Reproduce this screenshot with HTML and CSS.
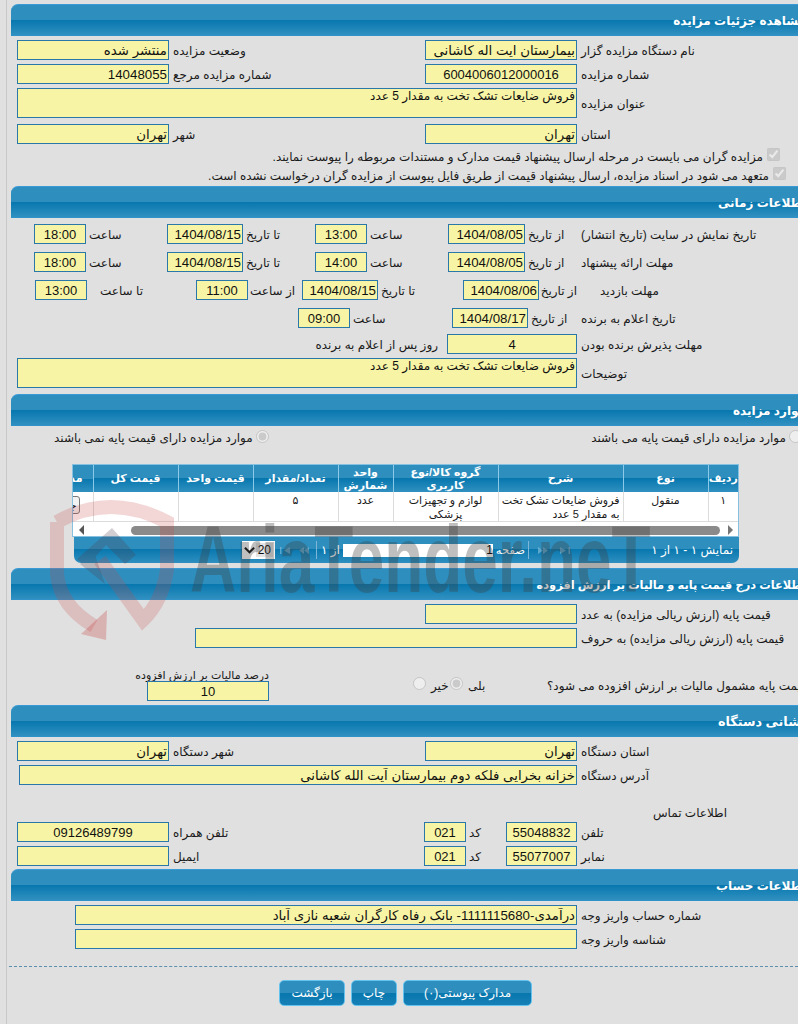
FILE: index.html
```html
<!DOCTYPE html>
<html lang="fa" dir="rtl">
<head>
<meta charset="utf-8">
<title>مشاهده جزئیات مزایده</title>
<link rel="stylesheet" href="styles.css">
</head>
<body>
<div class="page">

<h2 class="bar first">مشاهده جزئیات مزایده</h2>
<div class="row mt4"><label class="lbl">نام دستگاه مزایده گزار</label><input class="fld w152" readonly value="بیمارستان ایت اله کاشانی"><label class="lbl2">وضعیت مزایده</label><input class="fld w152" readonly value="منتشر شده"></div>
<div class="row mt4"><label class="lbl">شماره مزایده</label><input class="fld w152 ctr" readonly value="6004006012000016"><label class="lbl2">شماره مزایده مرجع</label><input class="fld w152" readonly value="14048055"></div>
<div class="row tall mt4"><label class="lbl">عنوان مزایده</label><div class="fld area wide">فروش ضایعات تشک تخت به مقدار 5 عدد</div></div>
<div class="row mt6"><label class="lbl">استان</label><input class="fld w152" readonly value="تهران"><label class="lbl2">شهر</label><input class="fld w152" readonly value="تهران"></div>
<div class="check c1"><input type="checkbox" checked disabled><span>مزایده گران می بایست در مرحله ارسال پیشنهاد قیمت مدارک و مستندات مربوطه را پیوست نمایند.</span></div>
<div class="check c2"><input type="checkbox" checked disabled><span>متعهد می شود در اسناد مزایده، ارسال پیشنهاد قیمت از طریق فایل پیوست از مزایده گران درخواست نشده است.</span></div>

<h2 class="bar s2">اطلاعات زمانی</h2>
<div class="row mt6"><label class="lbl">تاریخ نمایش در سایت (تاریخ انتشار)</label><span class="k k52">از تاریخ</span><input class="fld w77" readonly value="1404/08/05"><span class="k k81">ساعت</span><input class="fld w52 ctr" readonly value="13:00"><span class="k k72">تا تاریخ</span><input class="fld w76" readonly value="1404/08/15"><span class="k k81">ساعت</span><input class="fld w52 ctr" readonly value="18:00"></div>
<div class="row mt8"><label class="lbl">مهلت ارائه پیشنهاد</label><span class="k k52">از تاریخ</span><input class="fld w77" readonly value="1404/08/05"><span class="k k81">ساعت</span><input class="fld w52 ctr" readonly value="14:00"><span class="k k72">تا تاریخ</span><input class="fld w76" readonly value="1404/08/15"><span class="k k81">ساعت</span><input class="fld w52 ctr" readonly value="18:00"></div>
<div class="row mt8"><label class="lbl ind19">مهلت بازدید</label><span class="k k38">از تاریخ</span><input class="fld w76" readonly value="1404/08/06"><span class="k k85">تا تاریخ</span><input class="fld w76" readonly value="1404/08/15"><span class="k k54">از ساعت</span><input class="fld w52 ctr" readonly value="11:00"><span class="k k109">تا ساعت</span><input class="fld w52 ctr" readonly value="13:00"></div>
<div class="row mt8"><label class="lbl">تاریخ اعلام به برنده</label><span class="k k49">از تاریخ</span><input class="fld w76" readonly value="1404/08/17"><span class="k k102">ساعت</span><input class="fld w52 ctr" readonly value="09:00"></div>
<div class="row mt6"><label class="lbl">مهلت پذیرش برنده بودن</label><input class="fld w130 ctr" readonly value="4"><span class="after">روز پس از اعلام به برنده</span></div>
<div class="row tall mt4"><label class="lbl">توضیحات</label><div class="fld area wide">فروش ضایعات تشک تخت به مقدار 5 عدد</div></div>

<h2 class="bar s3">موارد مزایده</h2>
<div class="radios">
  <div class="radio-a"><input type="radio" name="base" disabled><span>موارد مزایده دارای قیمت پایه می باشند</span></div>
  <div class="radio-b"><input type="radio" name="base" checked disabled><span>موارد مزایده دارای قیمت پایه نمی باشند</span></div>
</div>

<div class="grid-wrap">
  <table class="grid">
    <thead><tr><th class="c30">ردیف</th><th class="c85">نوع</th><th class="c125">شرح</th><th class="c105">گروه کالا/نوع کاربری</th><th class="c55">واحد شمارش</th><th class="c85">تعداد/مقدار</th><th class="c75">قیمت واحد</th><th class="c85">قیمت کل</th><th class="c21">مدارک</th></tr></thead>
    <tbody><tr><td>۱</td><td>منقول</td><td class="start">فروش ضایعات تشک تخت<br>به مقدار 5 عدد</td><td>لوازم و تجهیزات پزشکی</td><td>عدد</td><td>۵</td><td></td><td></td><td class="clip"><button class="mini" type="button">جزئیات</button></td></tr></tbody>
  </table>
  <div class="hscroll"><span class="arr right"></span><span class="thumb"></span><span class="arr left"></span></div>
</div>
<div class="pager">
  <span class="pg-info">نمایش ۱ - ۱ از ۱</span>
  <span class="pg-icons">
    <svg class="pg-ic" viewBox="0 0 10 7"><path d="M0 0v7l6-3.500zM8.500 0h1.500v7h-1.500z"/></svg>
    <svg class="pg-ic" viewBox="0 0 10 7"><path d="M0 0v7l5-3.500zM5 0v7l5-3.500z"/></svg>
  </span>
  <span class="pg-sep"></span>
  <span class="pg-word">صفحه</span><input class="pg-num" readonly value="1"><span class="pg-of">از ۱</span>
  <span class="pg-sep sep2"></span>
  <span class="pg-icons second">
    <svg class="pg-ic" viewBox="0 0 10 7"><path d="M5 0v7l-5-3.500zM10 0v7l-5-3.500z"/></svg>
    <svg class="pg-ic" viewBox="0 0 10 7"><path d="M0 0h1.500v7h-1.500zM10 0v7l-6-3.500z"/></svg>
  </span>
  <span class="pg-size"><b>20</b><svg viewBox="0 0 12 8"><path d="M1 1.500l5 5 5-5" fill="none" stroke="#111" stroke-width="2.200"/></svg></span>
</div>

<h2 class="bar s4">اطلاعات درج قیمت پایه و مالیات بر ارزش افزوده</h2>
<div class="row mt4"><label class="lbl">قیمت پایه (ارزش ریالی مزایده) به عدد</label><input class="fld w152" readonly></div>
<div class="row mt4"><label class="lbl">قیمت پایه (ارزش ریالی مزایده) به حروف</label><input class="fld w382" readonly></div>
<div class="vat">
  <label class="vat-q">قیمت پایه مشمول مالیات بر ارزش افزوده می شود؟</label>
  <span class="yes">بلی</span><input class="r-yes" type="radio" name="vat" checked disabled>
  <span class="no">خیر</span><input class="r-no" type="radio" name="vat" disabled>
  <div class="vat-pct"><span>درصد مالیات بر ارزش افزوده</span><input class="fld w122 ctr" readonly value="10"></div>
</div>

<h2 class="bar s5">نشانی دستگاه</h2>
<div class="row mt4"><label class="lbl">استان دستگاه</label><input class="fld w152" readonly value="تهران"><label class="lbl2">شهر دستگاه</label><input class="fld w152" readonly value="تهران"></div>
<div class="row mt4"><label class="lbl">آدرس دستگاه</label><input class="fld w558" readonly value="خزانه بخرایی فلکه دوم بیمارستان آیت الله کاشانی"></div>
<div class="contact">اطلاعات تماس</div>
<div class="row mt2"><label class="lbl">تلفن</label><input class="fld w71 ctr" readonly value="55048832"><span class="code">کد</span><input class="fld w42 ctr" readonly value="021"><label class="lbl3">تلفن همراه</label><input class="fld w152 ctr" readonly value="09126489799"></div>
<div class="row mt4"><label class="lbl">نمابر</label><input class="fld w71 ctr" readonly value="55077007"><span class="code">کد</span><input class="fld w42 ctr" readonly value="021"><label class="lbl3">ایمیل</label><input class="fld w152" readonly></div>

<h2 class="bar s6">اطلاعات حساب</h2>
<div class="row mt4"><label class="lbl">شماره حساب واریز وجه</label><input class="fld w502" readonly value="درآمدی-1111115680- بانک رفاه کارگران شعبه نازی آباد"></div>
<div class="row mt4"><label class="lbl">شناسه واریز وجه</label><input class="fld w502" readonly></div>

<hr class="dash">
<div class="actions">
  <button class="btn b1" type="button">مدارک پیوستی(۰)</button>
  <button class="btn b2" type="button">چاپ</button>
  <button class="btn b3" type="button">بازگشت</button>
</div>

<div class="wm" aria-hidden="true">
  <svg class="wm-logo" viewBox="0 0 140 150">
    <path class="wm-shield" d="M7 24 Q60 -6 117 24 L117 72 Q112 104 93 122 L50 62 M7 24 L7 76 Q10 108 44 128"/>
    <path class="wm-head" d="M31 136 L57 112 L56 142 Z"/>
    <path class="wm-gavel" d="M27 61 L62 30 L86 57 L75 66 L56 47 L36 69 Z M30 66 L44 54 L55 86 Z"/>
  </svg>
  <span class="wm-text">AriaTender.neT</span>
</div>

</div>
</body>
</html>
```

FILE: styles.css
```css
* { box-sizing: border-box; }
html, body { margin: 0; height: 100%; overflow: hidden; background: #e0e0e0; }
body { font-family: "Liberation Sans", "DejaVu Sans", sans-serif; font-size: 12px; color: #1a1a1a; }
.page { position: relative; width: 792px; height: 1024px; margin-left: 6px; border-left: 1px solid #c8c8c8; overflow: hidden; }

.bar { height: 32px; margin: 0 -20px 0 4px; padding: 8px 12px 0 0; font-size: 12px; line-height: 16px; font-weight: bold; color: #fff; border-top: 1px solid #3a9ad6; border-bottom: 1px solid #2f93c9; border-top-left-radius: 7px; background: linear-gradient(#2e8fbf 0, #2e8fbf 50%, #0777ae 50%, #3090c0 100%); }
.first { margin-top: 4px; }
.s3 { margin-top: 6px; }
.s4 { margin-top: 5px; font-size: 11.400px; }
.s5 { margin-top: 4px; font-size: 12.800px; }
.s6 { margin-top: 3px; }

.row { display: flex; height: 20px; align-items: center; }
.row.tall { height: 30px; }
.mt2 { margin-top: 2px; }
.mt4 { margin-top: 4px; }
.mt6 { margin-top: 6px; }
.mt8 { margin-top: 8px; }

.lbl, .lbl2, .lbl3, .k { flex: none; padding-top: 2px; text-align: left; white-space: nowrap; }
.lbl { width: 221px; padding-left: 4px; }
.lbl2 { width: 256px; padding-left: 4px; }
.lbl3 { width: 255px; padding-left: 4px; }
.ind19 { padding-left: 23px; }

.fld { flex: none; height: 20px; margin: 0; padding: 0 1px; border: 1px solid #2a77a9; border-radius: 0; outline: 0; background: #f7f5a5; color: #111; font: 13.300px/17px "Liberation Sans", "DejaVu Sans", sans-serif; text-align: right; direction: rtl; }
.ctr { text-align: center; font-size: 13px; }
.area { height: 30px; overflow: hidden; font-size: 12px; line-height: 15px; }
.wide { width: 560px; }
.w42 { width: 42px; } .w52 { width: 52px; } .w71 { width: 71px; } .w76 { width: 76px; } .w77 { width: 77px; }
.w122 { width: 122px; } .w130 { width: 130px; } .w152 { width: 152px; } .w382 { width: 382px; } .w502 { width: 502px; } .w558 { width: 558px; }

.k { padding-left: 3px; }
.k38 { width: 38px; } .k49 { width: 49px; } .k52 { width: 52px; } .k54 { width: 54px; padding-left: 2px; } .k72 { width: 72px; }
.k81 { width: 81px; } .k85 { width: 85px; } .k102 { width: 102px; } .k109 { width: 109px; padding-left: 13px; }
.after { padding-right: 9px; padding-top: 2px; white-space: nowrap; }

.check { display: flex; align-items: flex-start; height: 19px; white-space: nowrap; }
.check input { flex: none; width: 13px; height: 13px; margin: 0 0 0 4px; }
.check span { line-height: 18px; }
.c1 { margin-top: 4px; padding-right: 18px; }
.c2 { padding-right: 12px; }

.radios { position: relative; height: 38px; }
.radio-a, .radio-b { position: absolute; top: 4px; display: flex; white-space: nowrap; }
.radio-a { right: -4px; }
.radio-b { left: 47px; }
.radios input { flex: none; width: 13px; height: 13px; margin: 0 0 0 3px; }
.radios span { line-height: 16px; }

.grid-wrap { position: relative; width: 667px; height: 73px; margin-left: 59px; margin-right: 59px; border: 1px solid #86c1e2; background: #fff; overflow: hidden; }
.grid { table-layout: fixed; width: 666px; border-collapse: collapse; }
.grid th { height: 27px; padding: 0; font-size: 11px; line-height: 13px; font-weight: bold; color: #fff; border-left: 1px solid #8cc8e8; background: linear-gradient(#2e8fbf 0, #2e8fbf 50%, #0777ae 50%, #3090c0 100%); overflow: hidden; }
.grid td { height: 29px; padding: 1px 1px 0; font-size: 11px; line-height: 14px; text-align: center; vertical-align: top; border-left: 1px solid #dcdcdc; border-bottom: 1px solid #dcdcdc; overflow: hidden; }
.grid td.start { text-align: right; white-space: nowrap; padding-right: 3px; }
.grid td.clip { padding: 4px 13px 0 0; text-align: right; direction: rtl; border-left: 0; }
.c30 { width: 30px; } .c85 { width: 85px; } .c125 { width: 125px; } .c105 { width: 105px; } .c55 { width: 55px; } .c75 { width: 75px; } .c21 { width: 21px; }
.grid th.c21 { padding-right: 10px; text-align: right; border-left: 0; white-space: nowrap; }
.mini { width: 42px; height: 18px; padding: 0 2px; font: 11px "DejaVu Sans", sans-serif; text-align: right; background: #f2f2f2; border: 1px solid #777; border-radius: 3px; }
.hscroll { display: flex; align-items: center; height: 16px; padding-right: 5px; }
.thumb { flex: none; width: 589px; height: 9px; margin-right: 8px; border-radius: 5px; background: #8a8a8a; }
.arr { flex: none; width: 0; height: 0; border-top: 5px solid transparent; border-bottom: 5px solid transparent; }
.arr.right { border-left: 5px solid #777; }
.arr.left { margin-right: 47px; border-right: 5px solid #555; }

.pager { display: flex; align-items: center; width: 665px; height: 26px; margin: 0 59px 0 0; padding-right: 6px; color: #fff; font-size: 12px; white-space: nowrap; border-radius: 0 0 7px 7px; background: linear-gradient(#2e8fbf 0, #2e8fbf 45%, #0777ae 45%, #2f8fc0 100%); }
.pg-info { width: 76px; flex: none; }
.pg-icons { display: flex; flex: none; gap: 12px; margin-right: 87px; opacity: .55; }
.pg-icons.second { gap: 9px; margin-right: 0; }
.pg-ic { width: 10px; height: 7px; fill: #9cc9e2; }
.pg-sep { flex: none; width: 1px; height: 18px; margin: 0 9px 0 3px; background: #7db6d6; }
.sep2 { margin: 0 4px 0 7px; }
.pg-word { flex: none; width: 32px; font-size: 11.500px; }
.pg-num { flex: none; width: 150px; height: 13px; padding: 0; border: 0; border-radius: 0; background: #fff; font: 12px "Liberation Sans", sans-serif; text-align: right; }
.pg-of { flex: none; width: 22px; text-align: left; }
.pg-size { display: flex; align-items: center; flex: none; justify-content: space-between; width: 33px; height: 18px; margin-right: 5px; padding: 0 2px; background: #fff; color: #111; }
.pg-size b { font-weight: normal; font-size: 12px; padding: 0 2px; background: #e4e4e4; }
.pg-size svg { width: 11px; height: 8px; }

.vat { position: relative; height: 53px; }
.vat > span, .vat > input, .vat-q { position: absolute; top: 30px; margin: 0; line-height: 16px; white-space: nowrap; }
.vat-q { left: 540px; }
.vat > input { top: 29px; width: 13px; height: 13px; }
.yes { left: 461px; }
.no { left: 424px; }
.vat > .r-yes { left: 443px; }
.vat > .r-no { left: 406px; }
.vat-pct { position: absolute; top: 21px; left: 127px; display: flex; flex-direction: column; align-items: flex-start; width: 135px; }
.vat-pct span { font-size: 11px; line-height: 12px; white-space: nowrap; }

.contact { height: 35px; padding: 20px 71px 0 0; line-height: 16px; white-space: nowrap; }
.code { flex: none; width: 40px; padding: 2px 0 0 3px; text-align: left; }

.dash { height: 0; margin: 17px 0 0 2px; border: 0; border-top: 1px dashed #5d8fae; }
.actions { display: flex; gap: 6px; margin-top: 13px; padding-right: 266px; }
.btn { height: 26px; padding: 0; font: 12px "Liberation Sans", "DejaVu Sans", sans-serif; color: #fff; border: 1px solid #63c3ee; border-radius: 5px; background: linear-gradient(#2e8fbf 0, #2e8fbf 50%, #0777ae 50%, #1780b6 100%); }
.b1 { width: 129px; } .b2 { width: 46px; } .b3 { width: 66px; }

.wm { position: absolute; left: 0; top: 0; width: 0; height: 0; direction: ltr; pointer-events: none; }
.wm-logo { position: absolute; left: 43px; top: 498px; width: 140px; height: 150px; }
.wm-shield { fill: none; stroke: rgba(200, 70, 70, .22); stroke-width: 14; }
.wm-head { fill: rgba(200, 70, 70, .3); }
.wm-gavel { fill: rgba(80, 60, 70, .25); }
.wm-text { position: absolute; left: 183px; top: 510px; font: bold 94px/100px "Liberation Sans", sans-serif; color: rgba(60, 60, 60, .33); white-space: nowrap; transform: scaleX(.68); transform-origin: 0 0; }
```
